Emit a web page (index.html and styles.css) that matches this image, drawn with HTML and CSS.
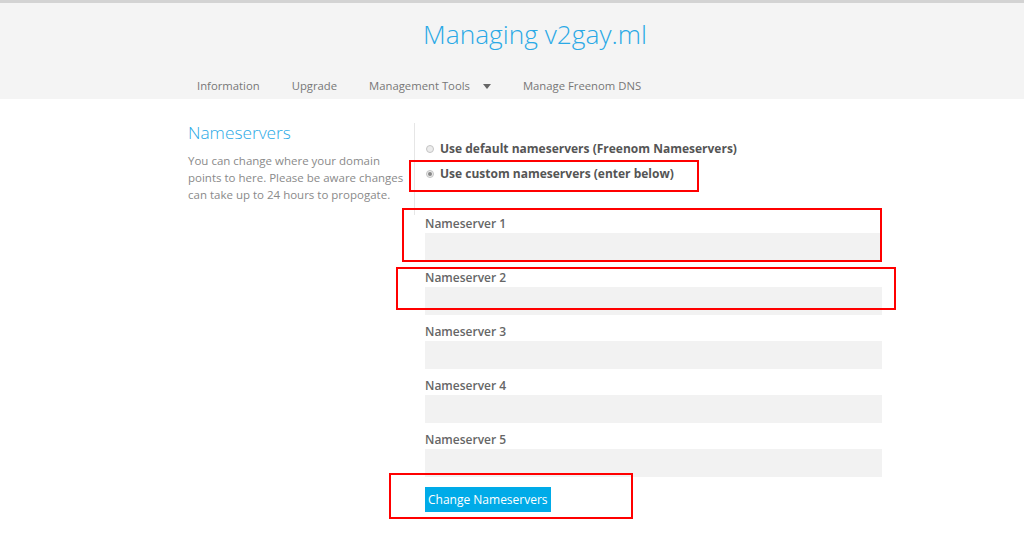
FILE: index.html
```html
<!DOCTYPE html>
<html lang="en">
<head>
    <meta charset="UTF-8">
    <title>Managing v2gay.ml</title>
    <link rel="stylesheet" href="styles.css">
</head>
<body>
    <div class="header">
        <div class="wrap">
            <h1 class="title">Managing v2gay.ml</h1>
            <ul class="nav">
                <li>Information</li>
                <li>Upgrade</li>
                <li>Management Tools <span class="caret"></span></li>
                <li>Manage Freenom DNS</li>
            </ul>
        </div>
    </div>

    <div class="wrap content">
        <div class="side">
            <h2>Nameservers</h2>
            <p>You can change where your domain points to here. Please be aware changes can take up to 24 hours to propogate.</p>
        </div>
        <div class="main">
            <div class="choices">
                <label class="radio"><span class="dot"></span>Use default nameservers (Freenom Nameservers)</label>
                <label class="radio"><span class="dot checked"></span>Use custom nameservers (enter below)</label>
            </div>
            <div class="field">
                <label>Nameserver 1</label>
                <div class="input"></div>
            </div>
            <div class="field">
                <label>Nameserver 2</label>
                <div class="input"></div>
            </div>
            <div class="field">
                <label>Nameserver 3</label>
                <div class="input"></div>
            </div>
            <div class="field">
                <label>Nameserver 4</label>
                <div class="input"></div>
            </div>
            <div class="field">
                <label>Nameserver 5</label>
                <div class="input"></div>
            </div>
            <button class="btn">Change Nameservers</button>
        </div>
    </div>

    <!-- red annotation boxes drawn over the screenshot -->
    <div class="mark mark-1"></div>
    <div class="mark mark-2"></div>
    <div class="mark mark-3"></div>
    <div class="mark mark-4"></div>
</body>
</html>
```

FILE: styles.css
```css
* {
    margin: 0;
    padding: 0;
    box-sizing: border-box;
}
html, body {
    width: 100%;
    height: 100%;
}
body {
    font-family: "Open Sans", "Liberation Sans", sans-serif;
    background: #fff;
    color: #888;
    overflow: hidden;
}

.wrap {
    width: 694px;
    margin-left: 188px;
}

.header {
    background: #f4f4f4;
    border-top: 3px solid #d3d3d3;
    height: 99px;
}
.title {
    font-weight: 300;
    font-size: 26.3px;
    color: #2aa9e6;
    text-align: center;
    padding-top: 13px;
    line-height: 36px;
}
.nav {
    list-style: none;
    display: flex;
    gap: 32px;
    padding-left: 9px;
    margin-top: 25px;
    font-size: 11.3px;
    color: #777;
    line-height: 17px;
}
.caret {
    display: inline-block;
    margin-left: 10px;
    vertical-align: middle;
    border-left: 4px solid transparent;
    border-right: 4px solid transparent;
    border-top: 5px solid #666;
}

.content {
    display: flex;
    padding-top: 22px;
}
.side {
    width: 226px;
}
.side h2 {
    font-weight: 300;
    font-size: 17.3px;
    color: #2aa9e6;
    line-height: 24px;
}
.side p {
    margin-top: 7px;
    font-size: 11.5px;
    line-height: 17px;
    color: #8a8a8a;
}

.main {
    flex: 1;
    padding-left: 11px;
}
.choices {
    border-left: 1px solid #e6e6e6;
    margin-left: -11px;
    margin-top: 2px;
    padding-left: 11px;
    padding-top: 13px;
    height: 92px;
}
.radio {
    display: flex;
    align-items: center;
    font-size: 12px;
    font-weight: 700;
    color: #555;
    line-height: 25px;
}
.dot {
    width: 8px;
    height: 8px;
    border-radius: 50%;
    border: 1px solid #c4c4c4;
    background: #ececec;
    margin: 0 6px 0 0;
    position: relative;
}
.dot.checked::after {
    content: "";
    position: absolute;
    left: 1px;
    top: 1px;
    width: 4px;
    height: 4px;
    border-radius: 50%;
    background: #888;
}

.field {
    margin-bottom: 8px;
}
.field label {
    display: block;
    font-size: 12px;
    font-weight: 600;
    color: #666;
    line-height: 18px;
}
.input {
    height: 28px;
    background: #f2f2f2;
}

.btn {
    margin-top: 2px;
    border: none;
    background: #00abe8;
    color: #fff;
    font-family: inherit;
    font-size: 12px;
    height: 25px;
    padding: 0 3px;
}

.mark {
    position: absolute;
    border: 2px solid #ff0000;
}
.mark-1 { left: 409px; top: 160px; width: 290px; height: 32px; }
.mark-2 { left: 402px; top: 208px; width: 480px; height: 54px; }
.mark-3 { left: 396px; top: 267px; width: 500px; height: 43px; }
.mark-4 { left: 389px; top: 473px; width: 244px; height: 46px; }
```
